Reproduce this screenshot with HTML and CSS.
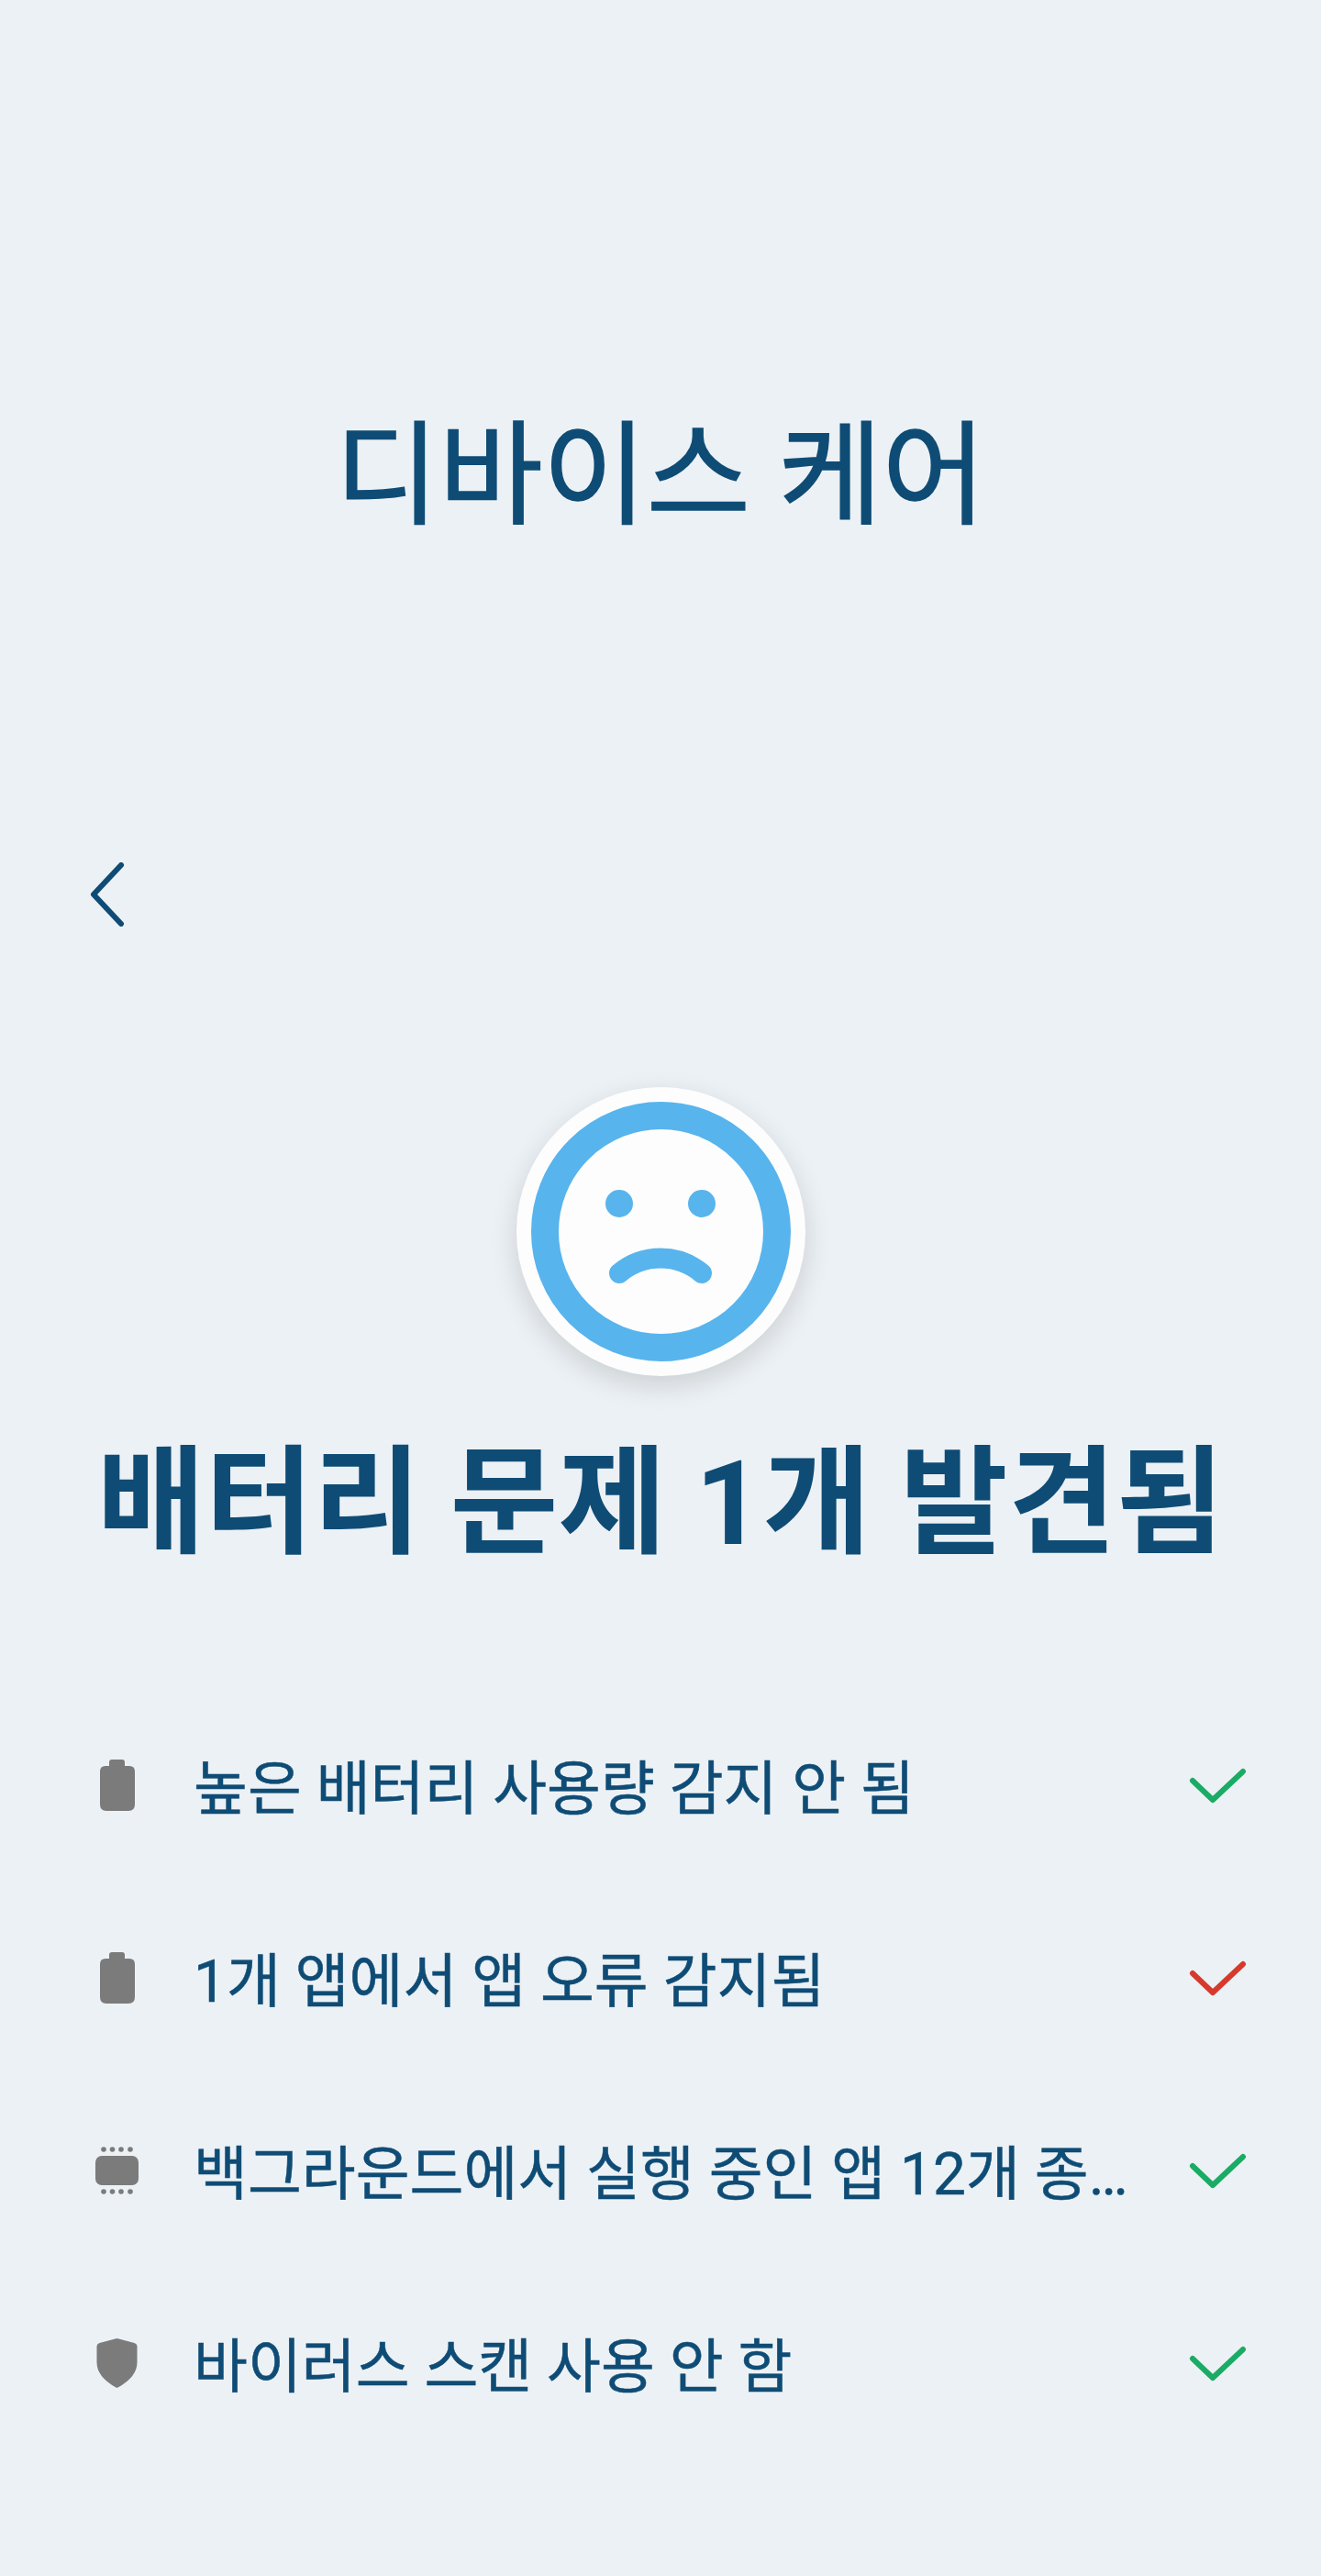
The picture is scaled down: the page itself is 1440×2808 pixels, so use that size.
FILE: index.html
```html
<!DOCTYPE html>
<html lang="ko">
<head>
    <meta charset="UTF-8">
    <meta name="viewport" content="width=device-width, initial-scale=1.0">
    <title>디바이스 케어</title>
    <link rel="stylesheet" href="styles.css">
</head>
<body>

    <div class="screen">
        <h1 class="app-title">디바이스 케어</h1>

        <div class="nav-row">
            <svg class="back-icon" viewBox="0 0 40 70" aria-label="뒤로">
                <path d="M35 3 L5 35 L35 67"/>
            </svg>
        </div>

        <div class="face-badge">
            <svg class="face-icon" viewBox="0 0 315 315">
                <circle class="face-ring" cx="157.5" cy="157.5" r="126.5"/>
                <circle class="face-dot" cx="112" cy="127" r="15"/>
                <circle class="face-dot" cx="202" cy="127" r="15"/>
                <path class="face-mouth" d="M112 203 A70 70 0 0 1 202 203"/>
            </svg>
        </div>

        <h2 class="result-title">배터리 문제 1개 발견됨</h2>

        <ul class="check-list">
            <li class="check-row">
                <svg class="row-icon" viewBox="0 0 56 64">
                    <path d="M19 4 q0 -3 3 -3 h11 q3 0 3 3 v4 h5 q6 0 6 6 v36 q0 7 -7 7 h-24 q-7 0 -7 -7 v-36 q0 -6 6 -6 h4 z"/>
                </svg>
                <span class="row-text">높은 배터리 사용량 감지 안 됨</span>
                <svg class="row-check ok" viewBox="0 0 64 44"><path d="M4 14 L26 35 L59 4"/></svg>
            </li>
            <li class="check-row">
                <svg class="row-icon" viewBox="0 0 56 64">
                    <path d="M19 4 q0 -3 3 -3 h11 q3 0 3 3 v4 h5 q6 0 6 6 v36 q0 7 -7 7 h-24 q-7 0 -7 -7 v-36 q0 -6 6 -6 h4 z"/>
                </svg>
                <span class="row-text">1개 앱에서 앱 오류 감지됨</span>
                <svg class="row-check bad" viewBox="0 0 64 44"><path d="M4 14 L26 35 L59 4"/></svg>
            </li>
            <li class="check-row">
                <svg class="row-icon" viewBox="0 0 56 64">
                    <rect x="4" y="13" width="47" height="32" rx="7"/>
                    <circle cx="13" cy="6" r="2.8"/><circle cx="22.500" cy="6" r="2.8"/><circle cx="32" cy="6" r="2.8"/><circle cx="42" cy="6" r="2.8"/>
                    <circle cx="13" cy="52" r="2.8"/><circle cx="22.500" cy="52" r="2.8"/><circle cx="32" cy="52" r="2.8"/><circle cx="42" cy="52" r="2.8"/>
                </svg>
                <span class="row-text">백그라운드에서 실행 중인 앱 12개 종료 가능</span>
                <svg class="row-check ok" viewBox="0 0 64 44"><path d="M4 14 L26 35 L59 4"/></svg>
            </li>
            <li class="check-row">
                <svg class="row-icon" viewBox="0 0 56 64">
                    <path d="M27.500 2 q1 0 2 0.500 l17 4.500 q3 1 3 4 v17 q0 16 -21 27.500 q-1 0.500 -2 0 q-21 -11.500 -21 -27.500 v-17 q0 -3 3 -4 l17 -4.500 q1 -0.500 2 -0.500 z"/>
                </svg>
                <span class="row-text">바이러스 스캔 사용 안 함</span>
                <svg class="row-check ok" viewBox="0 0 64 44"><path d="M4 14 L26 35 L59 4"/></svg>
            </li>
        </ul>
    </div>

</body>
</html>
```

FILE: styles.css
```css
/* Page */
body {
    margin: 0;
    background-color: #ecf1f5;
    color: #0f4c75;
    font-family: Roboto, "Noto Sans CJK KR", sans-serif;
}

.screen {
    height: 2808px;
    overflow: hidden;
    display: flex;
    flex-direction: column;
}

/* Title */
.app-title {
    margin: 429px 0 0;
    height: 180px;
    line-height: 180px;
    font-size: 123px;
    font-weight: 400;
    -webkit-text-stroke: 1.5px #0f4c75;
    text-align: center;
}

/* Back button */
.nav-row {
    margin-top: 331px;
    padding-left: 97px;
    height: 70px;
    display: flex;
}

.back-icon {
    width: 40px;
    height: 70px;
    fill: none;
    stroke: #0f4c75;
    stroke-width: 6;
    stroke-linecap: round;
    stroke-linejoin: round;
}

/* Sad face */
.face-badge {
    margin: 175px auto 0;
    width: 315px;
    height: 315px;
    border-radius: 50%;
    background: #fdfdfd;
    box-shadow: 0 10px 30px rgba(0, 0, 0, 0.14);
}

.face-icon {
    display: block;
    width: 315px;
    height: 315px;
}

.face-ring {
    fill: none;
    stroke: #58b4ec;
    stroke-width: 30;
}

.face-dot {
    fill: #58b4ec;
}

.face-mouth {
    fill: none;
    stroke: #58b4ec;
    stroke-width: 22;
    stroke-linecap: round;
}

/* Result */
.result-title {
    margin: 59px 0 0;
    height: 160px;
    line-height: 160px;
    font-size: 128px;
    font-weight: 700;
    text-align: center;
}

/* Check list */
.check-list {
    list-style: none;
    margin: 125px 0 0;
    padding: 0 80px 0 100px;
}

.check-row {
    height: 210px;
    display: flex;
    align-items: center;
}

.row-icon {
    flex: none;
    width: 56px;
    height: 64px;
    fill: #7b7b7b;
}

.row-text {
    margin-left: 55px;
    padding-top: 4px;
    width: 1026px;
    font-size: 64px;
    line-height: 90px;
    -webkit-text-stroke: 0.5px #0f4c75;
    white-space: nowrap;
    overflow: hidden;
    text-overflow: ellipsis;
}

.row-check {
    flex: none;
    margin-left: auto;
    width: 64px;
    height: 44px;
    fill: none;
    stroke-width: 6;
    stroke-linecap: round;
    stroke-linejoin: round;
}

.row-check.ok {
    stroke: #1aab65;
}

.row-check.bad {
    stroke: #d63a2c;
}
```
